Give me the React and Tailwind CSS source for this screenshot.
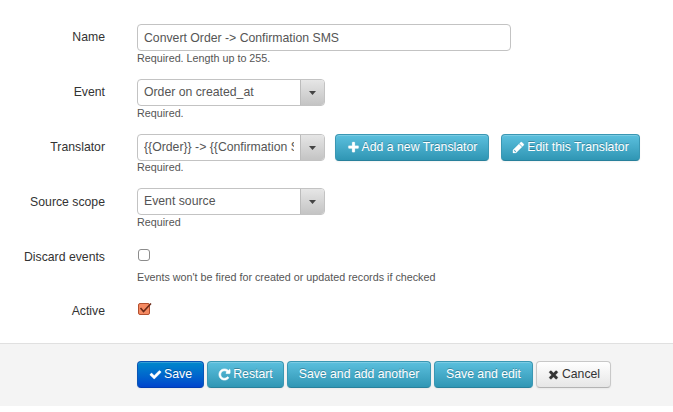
const ICONS = {
  check:
    "M1671 566q0 40-28 68l-724 724-136 136q-28 28-68 28t-68-28l-136-136-362-362q-28-28-28-68t28-68l136-136q28-28 68-28t68 28l294 295 656-657q28-28 68-28t68 28l136 136q28 28 28 68z",
  times:
    "M1490 1322q0 40-28 68l-136 136q-28 28-68 28t-68-28l-294-294-294 294q-28 28-68 28t-68-28l-136-136q-28-28-28-68t28-68l294-294-294-294q-28-28-28-68t28-68l136-136q28-28 68-28t68 28l294 294 294-294q28-28 68-28t68 28l136 136q28 28 28 68t-28 68l-294 294 294 294q28 28 28 68z",
  plus:
    "M1600 736v192q0 40-28 68t-68 28h-416v416q0 40-28 68t-68 28h-192q-40 0-68-28t-28-68v-416h-416q-40 0-68-28t-28-68v-192q0-40 28-68t68-28h416v-416q0-40 28-68t68-28h192q40 0 68 28t28 68v416h416q40 0 68 28t28 68z",
  pencil:
    "M491 1536l91-91-235-235-91 91v107h128v128h107zM960 416l416 416-832 832h-416v-416zm683 96q0 53-37 90l-166 166-416-416 166-165q36-38 90-38 53 0 91 38l235 234q37 39 37 91z",
  repeat:
    "M1664 256v448q0 26-19 45t-45 19h-448q-42 0-59-40-17-39 14-69l138-138q-148-137-349-137-104 0-198.500 40.500t-163.500 109.500-109.500 163.500-40.500 198.500 40.500 198.500 109.500 163.500 163.500 109.500 198.500 40.500q119 0 225-52t179-147q7-10 23-12 15 0 25 9l137 138q9 8 9.500 20.500t-7.500 22.500q-109 132-264 204.500t-327 72.500q-156 0-298-61t-245-164-164-245-61-298 61-298 164-245 245-164 298-61q147 0 284.500 55.500t244.500 156.500l130-129q29-31 70-14 39 17 39 59z",
};

function Icon({ name }) {
  return (
    <svg
      viewBox="0 0 1792 1792"
      className="h-[13px] w-[13px] shrink-0"
      fill="currentColor"
      stroke="currentColor"
      strokeWidth={name === "repeat" ? 90 : 30}
    >
      <path d={ICONS[name]} />
    </svg>
  );
}

const VARIANTS = {
  primary:
    "border-[#0a55b5] border-b-[#003bb0] bg-linear-to-b from-[#0088cc] to-[#0044cc] text-white [text-shadow:0_-1px_0_rgba(0,0,0,0.25)]",
  info: "border-[#3a97b3] border-b-[#28809b] bg-linear-to-b from-[#5bc0de] to-[#2f96b4] text-white [text-shadow:0_-1px_0_rgba(0,0,0,0.25)]",
  plain:
    "border-[#c8c8c8] border-b-[#b3b3b3] bg-linear-to-b from-white to-[#e6e6e6] text-[#333]",
};

function Button({ variant = "info", icon, width, children }) {
  return (
    <button
      className={`flex h-[27px] shrink-0 items-center justify-center gap-[2px] rounded-[4px] border whitespace-nowrap shadow-[inset_0_1px_0_rgba(255,255,255,0.2),0_1px_2px_rgba(0,0,0,0.05)] ${VARIANTS[variant]} ${width}`}
    >
      {icon && <Icon name={icon} />}
      <span>{children}</span>
    </button>
  );
}

function Select({ children }) {
  return (
    <div className="flex h-[27px] w-[188px] shrink-0 overflow-hidden rounded-[4px] border border-[#c3c3c3] text-[#555]">
      <div className="flex-1 pl-[6px] leading-[25px]">
        <div className="w-[150px] overflow-hidden whitespace-nowrap">{children}</div>
      </div>
      <div className="flex w-[24px] items-center justify-center border-l border-[#bcbcbc] bg-linear-to-b from-[#e6e6e6] to-[#c4c4c4]">
        <svg width="7" height="4" viewBox="0 0 7 4">
          <path d="M0 0h7L3.500 4z" fill="#444" />
        </svg>
      </div>
    </div>
  );
}

function Row({ label, help, height, labelPad = "pt-1", helpLeading = "leading-[15px]", children }) {
  return (
    <div className={`flex ${height}`}>
      <div className={`mr-8 w-[105px] shrink-0 text-right leading-[18px] text-[#333] ${labelPad}`}>{label}</div>
      <div>
        {children}
        {help && <div className={`text-[10.75px] text-[#555] ${helpLeading}`}>{help}</div>}
      </div>
    </div>
  );
}

export default function App() {
  return (
    <div className="h-[412px] w-[673px] overflow-hidden bg-white font-['Liberation_Sans',Arial,sans-serif] text-[12.25px]">
      <div className="h-[343px] pt-6">
        <Row label="Name" help="Required. Length up to 255." height="h-[55px]">
          <div className="h-[27px] w-[374px] rounded-[4px] border border-[#c3c3c3] pl-[6px] leading-[26px] text-[#555]">
            Convert Order -&gt; Confirmation SMS
          </div>
        </Row>
        <Row label="Event" help="Required." height="h-[55px]">
          <Select>Order on created_at</Select>
        </Row>
        <Row label="Translator" help="Required." height="h-[54px]" helpLeading="leading-[13px]">
          <div className="flex">
            <Select>{"{{Order}} -> {{Confirmation SMS}}"}</Select>
            <div className="ml-[10px] flex gap-3">
              <Button icon="plus" width="w-[154px]">Add a new Translator</Button>
              <Button icon="pencil" width="w-[139px]">Edit this Translator</Button>
            </div>
          </div>
        </Row>
        <Row label="Source scope" help="Required" height="h-[55px]" labelPad="pt-[5px]">
          <Select>Event source</Select>
        </Row>
        <Row
          label="Discard events"
          help="Events won't be fired for created or updated records if checked"
          height="h-[54px]"
          labelPad="pt-[5px]"
        >
          <div className="h-[27px] pt-[6px] pl-[1px]">
            <div className="h-3 w-3 rounded-[3px] border border-[#8c8c8c] bg-white" />
          </div>
        </Row>
        <Row label="Active" height="h-[30px]" labelPad="pt-[5px]">
          <div className="pt-[5px] pl-[1px]">
            <svg width="14" height="14" viewBox="0 0 14 14">
              <rect x="0.500" y="1.500" width="11" height="11" rx="1.500" fill="#f58a62" stroke="#b3502f" />
              <path d="M2.500 6L5.500 9.500L13 1.500" fill="none" stroke="#6b2a18" strokeWidth="1.600" />
            </svg>
          </div>
        </Row>
      </div>
      <div className="flex h-[63px] gap-[3px] border-t border-[#e0e0e0] bg-[#f4f4f4] pt-[17px] pl-[137px]">
        <Button variant="primary" icon="check" width="w-[67px]">Save</Button>
        <Button icon="repeat" width="w-[77px]">Restart</Button>
        <Button width="w-[144px]">Save and add another</Button>
        <Button width="w-[99px]">Save and edit</Button>
        <Button variant="plain" icon="times" width="w-[75px]">Cancel</Button>
      </div>
    </div>
  );
}
